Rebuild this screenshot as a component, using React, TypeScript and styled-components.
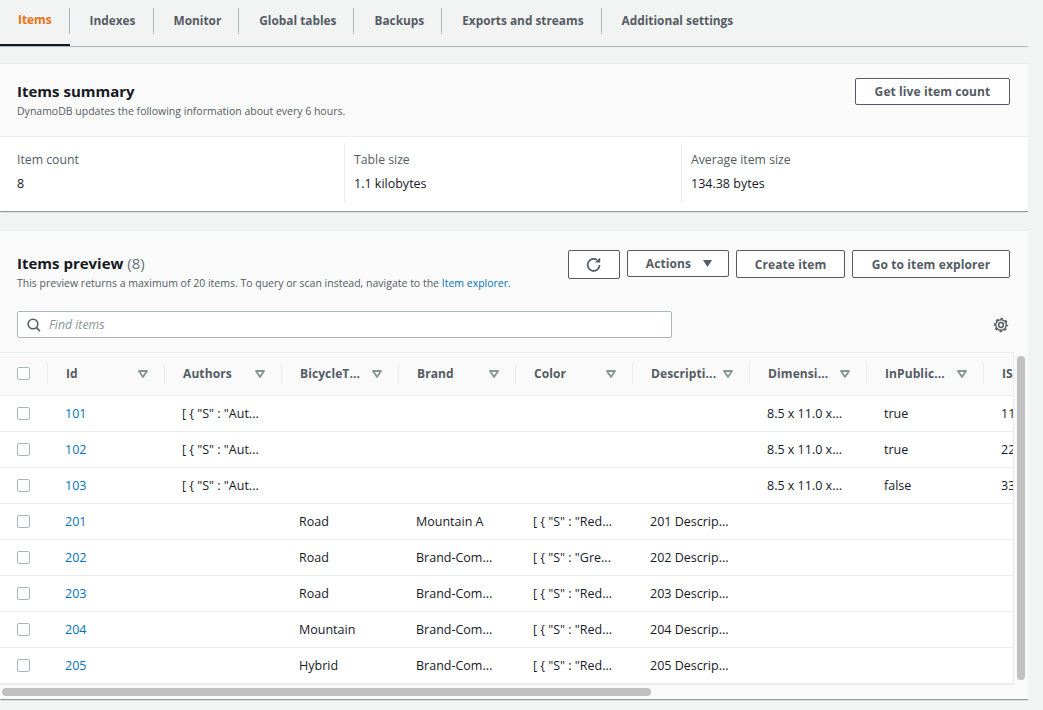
import React from "react";
import styled, { createGlobalStyle } from "styled-components";

const Global = createGlobalStyle`
  html, body { margin: 0; padding: 0; background: #f2f3f3; height: 100%; overflow: hidden; }
  body { font-family: "Open Sans", "Noto Sans", sans-serif; color: #16191f; -webkit-font-smoothing: antialiased; }
`;

const Page = styled.div`
  width: 1028px;
  height: 710px;
  overflow: hidden;
`;

const TabBar = styled.nav`
  display: flex;
  height: 46px;
  border-bottom: 1px solid #aab7b8;
  box-sizing: content-box;
  margin-bottom: 16px;
`;

const Tab = styled.div<{ $active?: boolean; $last?: boolean }>`
  display: flex;
  align-items: center;
  height: 46px;
  box-sizing: border-box;
  padding: 0 18px 6px ${(p) => (p.$active ? 18 : 20)}px;
  font-size: 11.85px;
  font-weight: 700;
  color: ${(p) => (p.$active ? "#ec7211" : "#545b64")};
  position: relative;
  ${(p) => (p.$active ? "border-bottom: 2px solid #16191f; margin-bottom: -1px; height: 46px;" : "")}
  &::after {
    content: "";
    display: ${(p) => (p.$last ? "none" : "block")};
    position: absolute;
    right: 0;
    top: 8px;
    height: 26px;
    width: 1px;
    background: #aab7b8;
  }
`;

const Card = styled.section<{ $grow?: boolean }>`
  background: ${(p) => (p.$grow ? "#fafafa" : "#fff")};
  box-shadow: 0 1px 1px 0 rgba(0, 28, 36, 0.3), 1px 1px 1px 0 rgba(0, 28, 36, 0.15);
  margin-bottom: 19px;
  ${(p) => (p.$grow ? "height: 469px; margin-bottom: 0; position: relative;" : "")}
`;

const CardHeader = styled.header`
  display: flex;
  justify-content: space-between;
  background: #fafafa;
  height: 74px;
  box-sizing: border-box;
  padding: 14px 18px 0 17px;
  border-bottom: 1px solid #eaeded;
  border-top: 1px solid #eaeded;
`;

const Title = styled.h2`
  margin: 0;
  padding-top: 1px;
  font-size: 15px;
  line-height: 25px;
  font-weight: 700;
  color: #16191f;
`;

const Count = styled.span`
  font-weight: 400;
  color: #687078;
`;

const Desc = styled.p`
  margin: 0;
  font-size: 10.5px;
  line-height: 14px;
  color: #545b64;
`;

const Link = styled.a`
  color: #0073bb;
  text-decoration: none;
`;

const Button = styled.button<{ $h?: number; $w: number }>`
  display: flex;
  align-items: center;
  justify-content: center;
  gap: 11px;
  width: ${(p) => p.$w}px;
  height: ${(p) => p.$h ?? 28}px;
  box-sizing: border-box;
  padding: 0;
  border: 1px solid #545b64;
  border-radius: 2px;
  background: #fff;
  color: #545b64;
  font-family: inherit;
  font-size: 12px;
  letter-spacing: 0.1px;
  font-weight: 700;
`;

const MenuButton = styled(Button)`
  gap: 12px;
  padding-left: 2px;
`;

const RefreshIcon = styled.svg`
  margin-top: 1px;
`;

const Stats = styled.div`
  display: grid;
  grid-template-columns: 345px 337px 1fr;
  height: 74px;
  padding-top: 6px;
  box-sizing: border-box;
`;

const Stat = styled.div<{ $first?: boolean }>`
  height: 60px;
  box-sizing: border-box;
  padding: 9px 0 0 ${(p) => (p.$first ? 17 : 9)}px;
  border-right: 1px solid #eaeded;
  &:last-child { border-right: none; }
`;

const StatLabel = styled.div`
  font-size: 12.25px;
  line-height: 16px;
  color: #545b64;
  margin-bottom: 8px;
`;

const StatValue = styled.div`
  font-size: 12.5px;
  line-height: 16px;
  color: #16191f;
`;

const PreviewHead = styled.div`
  height: 122px;
  box-sizing: border-box;
  padding: 19px 18px 0 17px;
  border-top: 1px solid #eaeded;
`;

const HeadRow = styled.div`
  display: flex;
  justify-content: space-between;
`;

const Actions = styled.div`
  display: flex;
  gap: 7px;
  align-items: flex-start;
`;

const SearchRow = styled.div`
  display: flex;
  justify-content: space-between;
  align-items: center;
  margin-top: 21px;
`;

const Search = styled.div`
  display: flex;
  align-items: center;
  gap: 8px;
  width: 655px;
  height: 27px;
  box-sizing: border-box;
  padding-left: 9px;
  background: #fff;
  border: 1px solid #aab7b8;
  border-radius: 2px;
  font-size: 12.25px;
  font-style: italic;
  color: #879596;
`;

const Gear = styled.svg`
  margin-right: 1px;
`;

const TableBox = styled.div`
  width: 1013px;
  height: 331px;
  overflow: hidden;
  background: #fff;
  border-top: 1px solid #eaeded;
  border-bottom: 1px solid #eaeded;
  border-right: 1px solid #eaeded;
  box-sizing: content-box;
`;

const Table = styled.table`
  border-collapse: collapse;
  table-layout: fixed;
  width: 1100px;
  font-size: 12.5px;
`;

const HeadRowEl = styled.tr`
  height: 42px;
  background: #fafafa;
`;

const Th = styled.th`
  padding: 0;
  border-bottom: 1px solid #eaeded;
  text-align: left;
  font-size: 12px;
  letter-spacing: 0.1px;
  font-weight: 700;
  color: #545b64;
  position: relative;
  &::after {
    content: "";
    position: absolute;
    right: 0;
    top: 10px;
    height: 21px;
    width: 1px;
    background: #eaeded;
  }
`;

const ThInner = styled.div<{ $check?: boolean }>`
  display: flex;
  align-items: center;
  justify-content: space-between;
  padding: 0 17px 0 ${(p) => (p.$check ? 17 : 18)}px;
  white-space: nowrap;
`;

const Tr = styled.tr`
  height: 36px;
`;

const Td = styled.td`
  padding: 0 0 0 17px;
  border-bottom: 1px solid #eaeded;
  white-space: nowrap;
  overflow: hidden;
  color: #16191f;
`;

const CheckCell = styled.td`
  padding: 0 0 0 17px;
  border-bottom: 1px solid #eaeded;
`;

const Check = styled.span`
  display: block;
  width: 13px;
  height: 13px;
  box-sizing: border-box;
  border: 1px solid #aab7b8;
  border-radius: 2px;
  background: #fff;
`;

const HScroll = styled.div`
  position: absolute;
  left: 2px;
  top: 458px;
  width: 649px;
  height: 8px;
  border-radius: 4px;
  background: #c1c1c1;
`;

const VScroll = styled.div`
  position: absolute;
  left: 1017px;
  top: 126px;
  width: 8px;
  height: 324px;
  border-radius: 4px;
  background: #c1c1c1;
`;

const Sort = () => (
  <svg width="10" height="8" viewBox="0 0 10 8">
    <path d="M1 1h8L5 7z" fill="none" stroke="#879596" strokeWidth="1.8" strokeLinejoin="round" />
  </svg>
);

const columns = ["Id", "Authors", "BicycleT...", "Brand", "Color", "Descripti...", "Dimensi...", "InPublic...", "IS"];

const rows: string[][] = [
  ["101", '[ { "S" : "Aut...', "", "", "", "", "8.5 x 11.0 x...", "true", "11"],
  ["102", '[ { "S" : "Aut...', "", "", "", "", "8.5 x 11.0 x...", "true", "22"],
  ["103", '[ { "S" : "Aut...', "", "", "", "", "8.5 x 11.0 x...", "false", "33"],
  ["201", "", "Road", "Mountain A", '[ { "S" : "Red...', "201 Descrip...", "", "", ""],
  ["202", "", "Road", "Brand-Com...", '[ { "S" : "Gre...', "202 Descrip...", "", "", ""],
  ["203", "", "Road", "Brand-Com...", '[ { "S" : "Red...', "203 Descrip...", "", "", ""],
  ["204", "", "Mountain", "Brand-Com...", '[ { "S" : "Red...', "204 Descrip...", "", "", ""],
  ["205", "", "Hybrid", "Brand-Com...", '[ { "S" : "Red...', "205 Descrip...", "", "", ""],
];

const tabs = ["Items", "Indexes", "Monitor", "Global tables", "Backups", "Exports and streams", "Additional settings"];

export default function App() {
  return (
    <Page>
      <Global />
      <TabBar>
        {tabs.map((t, i) => (
          <Tab key={t} $active={i === 0} $last={i === tabs.length - 1}>{t}</Tab>
        ))}
      </TabBar>

      <Card>
        <CardHeader>
          <div>
            <Title>Items summary</Title>
            <Desc>DynamoDB updates the following information about every 6 hours.</Desc>
          </div>
          <Button $w={155} $h={27}>Get live item count</Button>
        </CardHeader>
        <Stats>
          <Stat $first><StatLabel>Item count</StatLabel><StatValue>8</StatValue></Stat>
          <Stat><StatLabel>Table size</StatLabel><StatValue>1.1 kilobytes</StatValue></Stat>
          <Stat><StatLabel>Average item size</StatLabel><StatValue>134.38 bytes</StatValue></Stat>
        </Stats>
      </Card>

      <Card $grow>
        <PreviewHead>
          <HeadRow>
            <div>
              <Title>Items preview <Count>(8)</Count></Title>
              <Desc>
                This preview returns a maximum of 20 items. To query or scan instead, navigate to the <Link>Item explorer.</Link>
              </Desc>
            </div>
            <Actions>
              <Button $w={52} $h={29}>
                <RefreshIcon width="16" height="16" viewBox="0 0 16 16" fill="none" stroke="#545b64" strokeWidth="1.7">
                  <path d="M13.6 8a6 6 0 1 1-2.6-5" />
                  <path d="M9 5.6h5.2V.4z" fill="#545b64" stroke="none" />
                </RefreshIcon>
              </Button>
              <MenuButton $w={102} $h={27}>
                Actions
                <svg width="9" height="7" viewBox="0 0 9 7"><path d="M0 0h9L4.5 7z" fill="#545b64" /></svg>
              </MenuButton>
              <Button $w={109}>Create item</Button>
              <Button $w={158}>Go to item explorer</Button>
            </Actions>
          </HeadRow>
          <SearchRow>
            <Search>
              <svg width="14" height="14" viewBox="0 0 14 14" fill="none" stroke="#545b64" strokeWidth="1.6">
                <circle cx="6" cy="6" r="4.8" />
                <path d="M9.4 9.4 13 13.2" />
              </svg>
              Find items
            </Search>
            <Gear width="16" height="16" viewBox="0 0 16 16" fill="none" stroke="#545b64">
              <circle cx="8" cy="8" r="5.3" strokeWidth="1.4" />
              <circle cx="8" cy="8" r="6.4" strokeWidth="1.5" strokeDasharray="2.4 2.63" strokeDashoffset="1.2" />
              <circle cx="8" cy="8" r="2.4" strokeWidth="1.5" />
            </Gear>
          </SearchRow>
        </PreviewHead>
        <TableBox>
          <Table>
            <colgroup>
              <col width="48" />
              {columns.map((c) => <col key={c} width="117" />)}
            </colgroup>
            <thead>
              <HeadRowEl>
                <Th><ThInner $check><Check /></ThInner></Th>
                {columns.map((c) => (
                  <Th key={c}><ThInner>{c}<Sort /></ThInner></Th>
                ))}
              </HeadRowEl>
            </thead>
            <tbody>
              {rows.map((r) => (
                <Tr key={r[0]}>
                  <CheckCell><Check /></CheckCell>
                  {r.map((v, i) => (
                    <Td key={i}>{i === 0 ? <Link>{v}</Link> : v}</Td>
                  ))}
                </Tr>
              ))}
            </tbody>
          </Table>
        </TableBox>
        <HScroll />
        <VScroll />
      </Card>
    </Page>
  );
}
